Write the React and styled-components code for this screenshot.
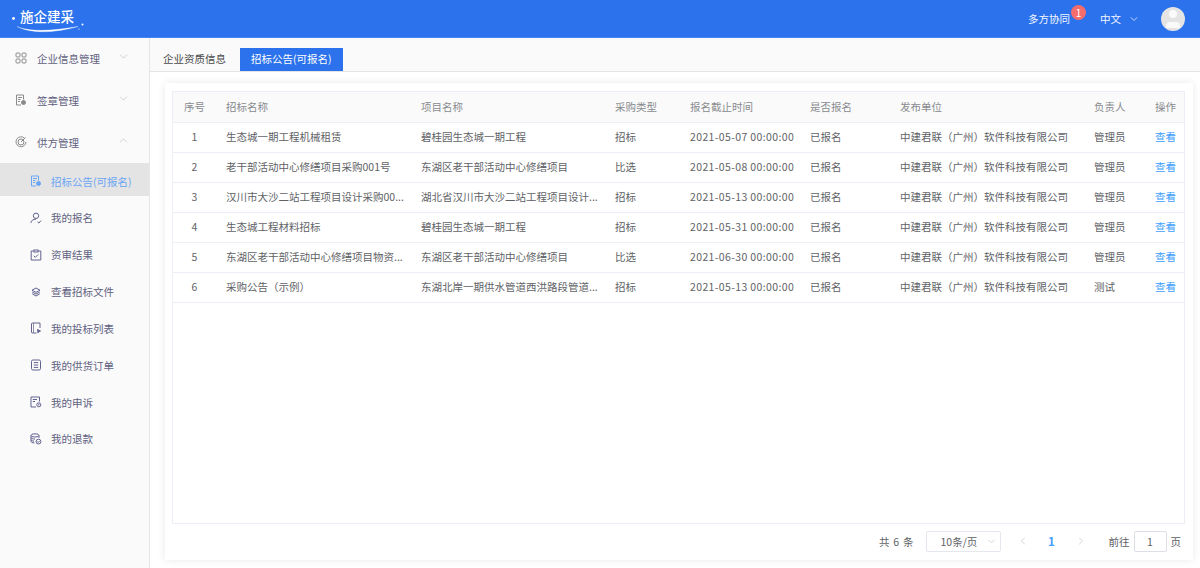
import React from 'react';
import styled, { createGlobalStyle } from 'styled-components';
import { ChevronDown, ChevronUp, ChevronLeft, ChevronRight, User } from 'lucide-react';

const GlobalStyle = createGlobalStyle`
    html, body { margin: 0; padding: 0; height: 100%; }
    body {
        font-family: "Noto Sans CJK SC", "Liberation Sans", sans-serif;
        font-size: 10.5px;
        color: #606266;
        background: #fff;
    }
    * { box-sizing: border-box; }
`;

const Page = styled.div`
    width: 1200px;
    height: 568px;
    display: flex;
    flex-direction: column;
    overflow: hidden;
`;

const Header = styled.header`
    height: 38px;
    flex: none;
    background: #2b72ec;
    border-bottom: 1px solid #3f86f2;
    display: flex;
    align-items: center;
    justify-content: space-between;
    padding: 0 15px 0 11px;
    color: #fff;
`;

const Logo = styled.div`
    position: relative;
    width: 76px;
    height: 34px;
    padding-left: 9px;
    font-size: 13.5px;
    line-height: 28px;
    font-weight: 500;
    color: #fff;
    white-space: nowrap;
`;

const LogoMark = styled.svg`
    position: absolute;
    left: 0;
    top: 0;
    width: 76px;
    height: 34px;
`;

const HeaderRight = styled.div`
    display: flex;
    align-items: center;
`;

const HeaderLink = styled.span`
    position: relative;
    margin-right: 30px;
    font-size: 10.5px;
    color: #f2f6ff;
`;

const Badge = styled.span`
    position: absolute;
    top: -6px;
    right: -16px;
    width: 15px;
    height: 15px;
    border-radius: 50%;
    background: #f56c6c;
    color: #fff;
    font-size: 10px;
    line-height: 15px;
    text-align: center;
`;

const Lang = styled.span`
    display: flex;
    align-items: center;
    gap: 7px;
    margin-right: 21px;
    font-size: 10.5px;
    color: #f2f6ff;
`;

const Avatar = styled.span`
    width: 24px;
    height: 24px;
    border-radius: 50%;
    background: #e4e4e4;
    overflow: hidden;
    display: flex;
    justify-content: center;
    align-items: flex-end;
    color: #fafafa;
`;

const Body = styled.div`
    flex: 1;
    display: flex;
    min-height: 0;
`;

const Sidebar = styled.aside`
    width: 150px;
    flex: none;
    background: #fafafa;
    border-right: 1px solid #e6e6e6;
`;

const TopMenu = styled.div`
    height: 42px;
    display: flex;
    align-items: center;
    padding: 0 0 2px 15px;
    color: #5f6180;
`;

const MenuIcon = styled.span`
    width: 12px;
    height: 12px;
    display: flex;
    margin-right: 10px;
    color: ${props => props.$color || '#8a8a8a'};
`;

const MenuLabel = styled.span`
    width: 80px;
`;

const Arrow = styled.span`
    display: flex;
    margin-top: -3px;
    color: #a9abb2;
`;

const SubList = styled.div`
    display: flex;
    flex-direction: column;
    gap: 3.85px;
    margin-top: -1px;
`;

const SubMenu = styled.div`
    height: 33px;
    display: flex;
    align-items: center;
    padding: 3px 0 0 30px;
    color: ${props => (props.$active ? '#6aa5f5' : '#5f6180')};
    background: ${props => (props.$active ? '#e4e4e4' : 'transparent')};
    ${MenuIcon} {
        margin-right: 9px;
        color: ${props => (props.$active ? '#6aa5f5' : '#62628f')};
    }
`;

const Main = styled.main`
    flex: 1;
    min-width: 0;
    display: flex;
    flex-direction: column;
    background: #fff;
`;

const Tabs = styled.div`
    height: 34px;
    flex: none;
    display: flex;
    align-items: flex-end;
    padding-left: 2px;
    background: #fafafa;
    border-bottom: 1px solid #e4e4e4;
`;

const Tab = styled.div`
    height: 23px;
    padding: 0 11px;
    margin-right: 3px;
    line-height: 22px;
    color: ${props => (props.$active ? '#fff' : '#4a4a4a')};
    background: ${props => (props.$active ? '#2b72ec' : 'transparent')};
`;

const Content = styled.div`
    flex: 1;
    min-height: 0;
    padding: 11px 7px 8px 15px;
`;

const Card = styled.section`
    height: 100%;
    padding: 8px 8px 0 7px;
    background: #fff;
    box-shadow: 0 0 8px rgba(0, 0, 0, 0.09);
    display: flex;
    flex-direction: column;
`;

const TableWrap = styled.div`
    height: 433px;
    flex: none;
    border: 1px solid #ebeef5;
`;

const Table = styled.table`
    width: 100%;
    table-layout: fixed;
    border-collapse: collapse;
    font-size: 10.5px;
`;

const Th = styled.th`
    width: ${props => props.$w}px;
    height: 30px;
    padding: 0 0 0 10px;
    background: #fafafa;
    font-weight: 400;
    color: #888a8f;
    text-align: left;
    border-bottom: 1px solid #ebeef5;
    ${props => props.$center && 'text-align: center; padding: 0;'}
`;

const Td = styled.td`
    height: 30px;
    padding: 0 0 2px 10px;
    color: #606266;
    border-bottom: 1px solid #ebeef5;
    white-space: nowrap;
    overflow: hidden;
    text-overflow: ellipsis;
    ${props => props.$center && 'text-align: center; padding: 0 0 2px;'}
`;

const DateText = styled.span`
    letter-spacing: 0.37px;
`;

const ViewLink = styled.span`
    color: #409eff;
`;

const Pager = styled.div`
    flex: 1;
    display: flex;
    align-items: center;
    justify-content: flex-end;
    padding: 0 4px 2px 0;
    color: #606266;
`;

const Total = styled.span`
    margin-right: 12px;
    word-spacing: 1.5px;
`;

const PageSize = styled.div`
    width: 75px;
    height: 21px;
    display: flex;
    align-items: center;
    padding: 0 3px 0 14px;
    justify-content: space-between;
    border: 1px solid #e4e7ed;
    border-radius: 2px;
    color: #606266;
    margin-right: 16px;
`;

const PageArrow = styled.span`
    display: flex;
    color: #c0c4cc;
`;

const PageNum = styled.span`
    width: 46px;
    text-align: center;
    font-weight: 700;
    font-size: 11.5px;
    color: #409eff;
`;

const Jump = styled.span`
    margin-left: 22px;
    display: flex;
    align-items: center;
`;

const JumpInput = styled.span`
    width: 33px;
    height: 21px;
    margin: 0 4px;
    border: 1px solid #dcdfe6;
    border-radius: 2px;
    text-align: center;
    line-height: 19px;
`;

const company = '中建君联（广州）软件科技有限公司';

const rows = [
    { name: '生态城一期工程机械租赁', project: '碧桂园生态城一期工程', type: '招标', date: '2021-05-07 00:00:00', owner: '管理员' },
    { name: '老干部活动中心修缮项目采购001号', project: '东湖区老干部活动中心修缮项目', type: '比选', date: '2021-05-08 00:00:00', owner: '管理员' },
    { name: '汉川市大沙二站工程项目设计采购00...', project: '湖北省汉川市大沙二站工程项目设计...', type: '招标', date: '2021-05-13 00:00:00', owner: '管理员' },
    { name: '生态城工程材料招标', project: '碧桂园生态城一期工程', type: '招标', date: '2021-05-31 00:00:00', owner: '管理员' },
    { name: '东湖区老干部活动中心修缮项目物资...', project: '东湖区老干部活动中心修缮项目', type: '比选', date: '2021-06-30 00:00:00', owner: '管理员' },
    { name: '采购公告（示例）', project: '东湖北岸一期供水管道西洪路段管道...', type: '招标', date: '2021-05-13 00:00:00', owner: '测试' },
];

const Svg = ({ children }) => (
    <svg width="12" height="12" viewBox="0 0 12 12" fill="none" stroke="currentColor" strokeWidth="1">
        {children}
    </svg>
);

const GridIcon = () => (
    <Svg>
        <rect x="1" y="1" width="4" height="4" rx="1" />
        <rect x="7" y="1" width="4" height="4" rx="1" />
        <rect x="1" y="7" width="4" height="4" rx="1" />
        <rect x="7" y="7" width="4" height="4" rx="1" />
    </Svg>
);

const DocBadgeIcon = () => (
    <Svg>
        <path d="M6 11H1.5V1H8.5V5.5" />
        <path d="M3 3.5H7M3 5.5H5.5M3 7.5H5" />
        <circle cx="8.5" cy="8.5" r="2" fill="currentColor" />
    </Svg>
);

const TargetIcon = () => (
    <Svg>
        <path d="M9.5 2.2A5 5 0 1 0 11 6" />
        <circle cx="6" cy="6" r="3" />
        <path d="M6 6L10.5 1.5" />
    </Svg>
);

const PersonIcon = () => (
    <Svg>
        <circle cx="6" cy="3.8" r="2.7" />
        <path d="M1 11C1 8.5 3 7.2 6 7.2M7.5 10L9 11L11 8.5" />
    </Svg>
);

const ClipboardIcon = () => (
    <Svg>
        <path d="M4 2H1.2V11H10.8V2H8" />
        <rect x="4" y="1" width="4" height="2" />
        <path d="M3.8 6.8L5.4 8.3L8.2 5.5" />
    </Svg>
);

const LayersIcon = () => (
    <Svg>
        <path d="M6 2L10 4.2L6 6.4L2 4.2Z" />
        <path d="M2.2 6L6 8.1L9.8 6M2.2 7.8L6 10L9.8 7.8" />
    </Svg>
);

const ListDocIcon = () => (
    <Svg>
        <path d="M10 6V1H2.5C1.8 1 1.5 1.4 1.5 2V10C1.5 10.6 1.8 11 2.5 11H6.5" />
        <path d="M3.5 1V11" strokeWidth="0.7" />
        <path d="M7.5 7.5L10.5 9L8.8 9.5L8 11Z" fill="currentColor" />
    </Svg>
);

const OrderIcon = () => (
    <Svg>
        <rect x="1.5" y="1" width="9" height="10" rx="1.4" />
        <path d="M3.8 3.6H8.2M3.8 6H8.2M3.8 8.4H8.2" />
    </Svg>
);

const ComplainIcon = () => (
    <Svg>
        <path d="M6 11H1V1H9.5V5.5" />
        <path d="M2.8 3.5H7M2.8 5.5H5" />
        <circle cx="8.8" cy="8.8" r="2" />
        <path d="M8.8 7.8V9M8.8 9.5V9.9" />
    </Svg>
);

const RefundIcon = () => (
    <Svg>
        <ellipse cx="5" cy="2.4" rx="4" ry="1.6" />
        <path d="M1 2.4V8.4C1 9.2 2.4 9.8 4.4 9.9M9 2.4V5M1 4.6C1 5.4 2.6 6 5 6M1 6.8C1 7.5 2.2 8 4 8.1" />
        <circle cx="8.5" cy="8.6" r="2.4" />
        <path d="M7.4 8.6L8.3 9.4L9.6 7.9" />
    </Svg>
);

const subMenus = [
    { label: '招标公告(可报名)', icon: <DocBadgeIcon />, active: true },
    { label: '我的报名', icon: <PersonIcon /> },
    { label: '资审结果', icon: <ClipboardIcon /> },
    { label: '查看招标文件', icon: <LayersIcon /> },
    { label: '我的投标列表', icon: <ListDocIcon /> },
    { label: '我的供货订单', icon: <OrderIcon /> },
    { label: '我的申诉', icon: <ComplainIcon /> },
    { label: '我的退款', icon: <RefundIcon /> },
];

export default function App() {
    return (
        <Page>
            <GlobalStyle />
            <Header>
                <Logo>
                    施企建采
                    <LogoMark viewBox="0 0 76 34" fill="none">
                        <circle cx="2.5" cy="16.5" r="1.4" fill="#fff" />
                        <circle cx="71.5" cy="22.5" r="1" fill="#fff" />
                        <circle cx="68" cy="27" r="0.6" fill="#fff" />
                        <path d="M6 24.5C18 30 42 29 67 24.5C44 31 20 32 6 24.5Z" fill="#fff" stroke="#fff" strokeWidth="0.3" />
                    </LogoMark>
                </Logo>
                <HeaderRight>
                    <HeaderLink>
                        多方协同
                        <Badge>1</Badge>
                    </HeaderLink>
                    <Lang>
                        中文
                        <ChevronDown size={12} strokeWidth={1.5} />
                    </Lang>
                    <Avatar>
                        <User size={24} fill="currentColor" strokeWidth={0} />
                    </Avatar>
                </HeaderRight>
            </Header>
            <Body>
                <Sidebar>
                    <TopMenu>
                        <MenuIcon><GridIcon /></MenuIcon>
                        <MenuLabel>企业信息管理</MenuLabel>
                        <Arrow><ChevronDown size={13} strokeWidth={1} /></Arrow>
                    </TopMenu>
                    <TopMenu>
                        <MenuIcon><DocBadgeIcon /></MenuIcon>
                        <MenuLabel>签章管理</MenuLabel>
                        <Arrow><ChevronDown size={13} strokeWidth={1} /></Arrow>
                    </TopMenu>
                    <TopMenu>
                        <MenuIcon><TargetIcon /></MenuIcon>
                        <MenuLabel>供方管理</MenuLabel>
                        <Arrow><ChevronUp size={13} strokeWidth={1} /></Arrow>
                    </TopMenu>
                    <SubList>
                        {subMenus.map(item => (
                            <SubMenu key={item.label} $active={item.active}>
                                <MenuIcon>{item.icon}</MenuIcon>
                                {item.label}
                            </SubMenu>
                        ))}
                    </SubList>
                </Sidebar>
                <Main>
                    <Tabs>
                        <Tab>企业资质信息</Tab>
                        <Tab $active>招标公告(可报名)</Tab>
                    </Tabs>
                    <Content>
                        <Card>
                            <TableWrap>
                                <Table>
                                    <thead>
                                        <tr>
                                            <Th $w={43} $center>序号</Th>
                                            <Th $w={195}>招标名称</Th>
                                            <Th $w={194}>项目名称</Th>
                                            <Th $w={75}>采购类型</Th>
                                            <Th $w={120}>报名截止时间</Th>
                                            <Th $w={90}>是否报名</Th>
                                            <Th $w={194}>发布单位</Th>
                                            <Th $w={61}>负责人</Th>
                                            <Th>操作</Th>
                                        </tr>
                                    </thead>
                                    <tbody>
                                        {rows.map((row, index) => (
                                            <tr key={row.name}>
                                                <Td $center>{index + 1}</Td>
                                                <Td>{row.name}</Td>
                                                <Td>{row.project}</Td>
                                                <Td>{row.type}</Td>
                                                <Td><DateText>{row.date}</DateText></Td>
                                                <Td>已报名</Td>
                                                <Td>{company}</Td>
                                                <Td>{row.owner}</Td>
                                                <Td><ViewLink>查看</ViewLink></Td>
                                            </tr>
                                        ))}
                                    </tbody>
                                </Table>
                            </TableWrap>
                            <Pager>
                                <Total>共 6 条</Total>
                                <PageSize>
                                    10条/页
                                    <PageArrow><ChevronDown size={11} strokeWidth={1.5} /></PageArrow>
                                </PageSize>
                                <PageArrow><ChevronLeft size={12} strokeWidth={1.5} /></PageArrow>
                                <PageNum>1</PageNum>
                                <PageArrow><ChevronRight size={12} strokeWidth={1.5} /></PageArrow>
                                <Jump>
                                    前往
                                    <JumpInput>1</JumpInput>
                                    页
                                </Jump>
                            </Pager>
                        </Card>
                    </Content>
                </Main>
            </Body>
        </Page>
    );
}
